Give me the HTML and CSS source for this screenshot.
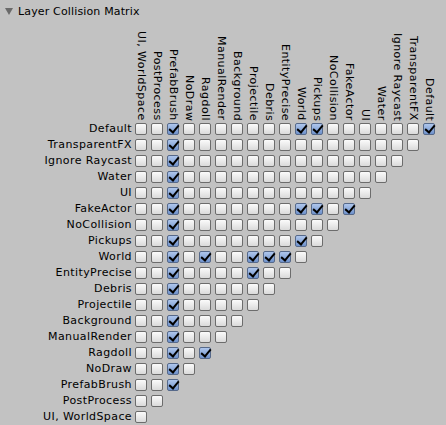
FILE: index.html
```html
<!DOCTYPE html>
<html lang="en">
<head>
    <meta charset="UTF-8">
    <title>Layer Collision Matrix</title>
    <link rel="stylesheet" href="styles.css">
</head>
<body>

    <div class="panel">
        <div class="foldout"><span class="arrow"></span>Layer Collision Matrix</div>

        <div class="matrix">
            <div class="head-row" id="head-row">
                <div class="corner"></div>
            </div>
            <div id="rows">
                <!-- Populated via JavaScript -->
            </div>
        </div>
    </div>

    <script>
        const layers = [
            'Default', 'TransparentFX', 'Ignore Raycast', 'Water', 'UI',
            'FakeActor', 'NoCollision', 'Pickups', 'World', 'EntityPrecise',
            'Debris', 'Projectile', 'Background', 'ManualRender', 'Ragdoll',
            'NoDraw', 'PrefabBrush', 'PostProcess', 'UI, WorldSpace'
        ];

        // pairs of layer indexes that collide
        const collides = [
            [0, 0], [0, 7], [0, 8],
            [5, 5], [5, 7], [5, 8],
            [7, 8],
            [8, 9], [8, 10], [8, 11], [8, 14],
            [9, 11],
            [14, 14]
        ];

        function isChecked(a, b) {
            // PrefabBrush hits everything up to itself
            if ((a === 16 && b <= 16) || (b === 16 && a <= 16)) return true;
            return collides.some(([x, y]) => (x === a && y === b) || (x === b && y === a));
        }

        const last = layers.length - 1;
        const headRow = document.getElementById('head-row');
        for (let i = last; i >= 0; i--) {
            const th = document.createElement('div');
            th.className = 'col-label';
            th.textContent = layers[i];
            headRow.appendChild(th);
        }

        const rowsEl = document.getElementById('rows');
        layers.forEach((name, r) => {
            const row = document.createElement('div');
            row.className = 'row';
            let html = `<div class="row-label">${name}</div>`;
            for (let c = last; c >= r; c--) {
                html += `<span class="cell"><i class="cb${isChecked(r, c) ? ' on' : ''}"></i></span>`;
            }
            row.innerHTML = html;
            rowsEl.appendChild(row);
        });
    </script>

</body>
</html>
```

FILE: styles.css
```css
body, html {
    margin: 0;
    padding: 0;
    background: #c2c2c2;
    color: #000;
    font-family: 'DejaVu Sans', sans-serif;
    font-size: 11px;
}

.panel {
    width: 446px;
    height: 425px;
}

.foldout {
    display: flex;
    align-items: center;
    height: 22px;
    padding-left: 5px;
    letter-spacing: 0.15px;
}

.arrow {
    width: 0;
    height: 0;
    border-left: 4px solid transparent;
    border-right: 4px solid transparent;
    border-top: 7px solid #6a6a6a;
    margin-right: 5px;
}

.head-row {
    display: flex;
    align-items: flex-end;
    height: 99px;
}

.corner {
    width: 133px;
    flex: none;
}

.col-label {
    writing-mode: vertical-rl;
    width: 16px;
    line-height: 16px;
    flex: none;
    white-space: nowrap;
    letter-spacing: 0.45px;
}

.row {
    display: flex;
    height: 16px;
    align-items: center;
}

.row-label {
    width: 133px;
    flex: none;
    text-align: right;
    line-height: 16px;
    padding-right: 1px;
    box-sizing: border-box;
    letter-spacing: 0.4px;
}

.cell {
    width: 16px;
    height: 16px;
    flex: none;
    display: flex;
    align-items: center;
    justify-content: center;
}

.cb {
    position: relative;
    width: 12px;
    height: 12px;
    box-sizing: border-box;
    border: 1px solid #6c6c6c;
    border-radius: 2px;
    background: linear-gradient(#fbfbfb, #dadada);
}

.cb.on {
    border-color: #56698a;
    background: linear-gradient(#aec6ec, #6f92cc);
}

/* check mark */
.cb.on::after {
    content: '';
    position: absolute;
    left: 3px;
    top: -1px;
    width: 4px;
    height: 8px;
    border-right: 2px solid #000;
    border-bottom: 2px solid #000;
    transform: rotate(40deg);
}
```
